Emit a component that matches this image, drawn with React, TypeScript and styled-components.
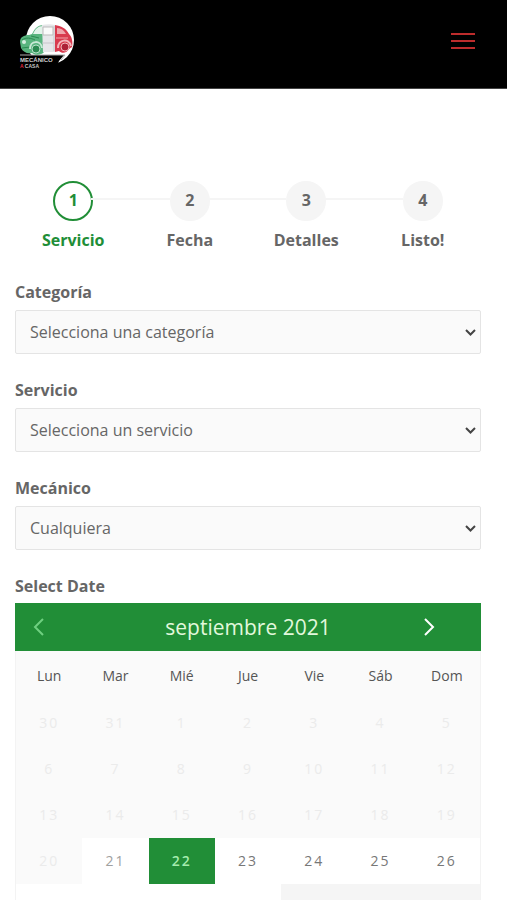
import React from "react";
import styled, { createGlobalStyle, css } from "styled-components";

const GREEN = "#218e37";

const GlobalStyle = createGlobalStyle`
  *, *::before, *::after { box-sizing: border-box; }
  body {
    margin: 0;
    background: #fff;
    color: #666;
    font-family: "Open Sans", sans-serif;
    font-size: 16px;
  }
`;

const Page = styled.div`
  height: 100vh;
  overflow-x: hidden;
  overflow-y: auto;
  scrollbar-width: none;
`;

const Header = styled.header`
  display: flex;
  align-items: center;
  justify-content: space-between;
  height: 89px;
  padding: 0 32px 6px 18px;
  background: #000;
  border-bottom: 1px solid #444;
`;

const LogoLink = styled.a`
  display: block;
  width: 58px;
  height: 54px;

  svg {
    display: block;
  }
`;

const MenuButton = styled.button`
  display: flex;
  padding: 0;
  border: 0;
  background: none;
`;

const Main = styled.main`
  padding: 92px 26px 30px 15px;
`;

const Steps = styled.ol`
  display: grid;
  grid-template-columns: repeat(4, 1fr);
  margin: 0 0 28px;
  padding: 0;
  list-style: none;
`;

const Step = styled.li<{ $active?: boolean }>`
  position: relative;
  display: flex;
  flex-direction: column;
  align-items: center;
  gap: 7px;
  font-weight: 700;
  line-height: 24px;
  color: ${(p) => (p.$active ? GREEN : "#666")};

  &:not(:last-child)::after {
    content: "";
    position: absolute;
    top: 17px;
    left: calc(50% + 18px);
    width: calc(100% - 38px);
    height: 2px;
    background: #f5f5f5;
  }
`;

const Circle = styled.span<{ $active?: boolean }>`
  display: flex;
  align-items: center;
  justify-content: center;
  width: 40px;
  height: 40px;
  padding-bottom: 2px;
  border-radius: 50%;
  background: ${(p) => (p.$active ? "#fff" : "#f5f5f5")};
  border: 2px solid ${(p) => (p.$active ? GREEN : "#f5f5f5")};
`;

const Field = styled.div`
  display: flex;
  flex-direction: column;
  gap: 6px;
  margin-bottom: 24px;
`;

const labelText = css`
  font-size: 16px;
  font-weight: 700;
  line-height: 24px;
  color: #666;
`;

const Label = styled.label`
  ${labelText}
`;

const DateLabel = styled.h2`
  ${labelText}
  margin: 0 0 5px;
`;

const SelectBox = styled.div`
  display: grid;
  align-items: center;

  > * {
    grid-area: 1 / 1;
  }

  svg {
    justify-self: end;
    margin-right: 4px;
    pointer-events: none;
  }
`;

const Select = styled.select`
  appearance: none;
  width: 100%;
  height: 44px;
  padding: 0 32px 0 14px;
  border: 1px solid #e4e4e4;
  border-radius: 2px;
  background: #fafafa;
  color: #666;
  font: inherit;
`;

const Calendar = styled.section`
  background: #fafafa;
`;

const MonthBar = styled.div`
  display: grid;
  grid-template-columns: 76px 1fr 76px;
  align-items: center;
  height: 48px;
  background: ${GREEN};
  color: #fff;
`;

const MonthName = styled.h3`
  margin: 0;
  font-size: 21px;
  font-weight: 400;
  line-height: 28px;
  text-align: center;
  color: #e2f8dc;
`;

const ArrowButton = styled.button`
  display: flex;
  padding: 0 0 0 18px;
  border: 0;
  background: none;
  color: #fff;

  &:disabled {
    color: #6fd080;
  }
`;

const Days = styled.table`
  width: 100%;
  table-layout: fixed;
  border-collapse: separate;
  border-spacing: 0;
  border: 1px solid #f3f3f3;
  border-top: 0;
`;

const WeekDay = styled.th`
  height: 49px;
  padding: 0;
  font-size: 14px;
  font-weight: 400;
  color: #555;
`;

type DayKind = "past" | "muted" | "today" | "open" | "empty";

const dayBackground: Record<DayKind, string> = {
  past: "#fafafa",
  muted: "#fff",
  today: GREEN,
  open: "#fff",
  empty: "#f5f5f5",
};

const dayColor: Record<DayKind, string> = {
  past: "#ebebeb",
  muted: "#a0a0a0",
  today: "#a5ecae",
  open: "#777",
  empty: "#f5f5f5",
};

const DayCell = styled.td<{ $kind: DayKind }>`
  height: 46px;
  padding: 0;
  background: ${(p) => dayBackground[p.$kind]};
`;

const DayButton = styled.button<{ $kind: DayKind }>`
  display: block;
  width: 100%;
  height: 46px;
  padding: 0;
  border: 0;
  background: none;
  color: ${(p) => dayColor[p.$kind]};
  font: inherit;
  font-size: 14px;
  font-weight: ${(p) => (p.$kind === "today" ? 600 : 400)};
  line-height: 14px;
  letter-spacing: 2px;
`;

const steps = ["Servicio", "Fecha", "Detalles", "Listo!"];

const fields = [
  { id: "categoria", label: "Categoría", value: "Selecciona una categoría" },
  { id: "servicio", label: "Servicio", value: "Selecciona un servicio" },
  { id: "mecanico", label: "Mecánico", value: "Cualquiera" },
];

const weekDays = ["Lun", "Mar", "Mié", "Jue", "Vie", "Sáb", "Dom"];

const weeks: (number | null)[][] = [
  [30, 31, 1, 2, 3, 4, 5],
  [6, 7, 8, 9, 10, 11, 12],
  [13, 14, 15, 16, 17, 18, 19],
  [20, 21, 22, 23, 24, 25, 26],
  [27, 28, 29, 30, null, null, null],
];

function kindOf(day: number | null, week: number): DayKind {
  if (day === null) return "empty";
  if (week < 3 || (week === 3 && day === 20)) return "past";
  if (day === 21) return "muted";
  if (day === 22) return "today";
  return "open";
}

function Logo() {
  return (
    <svg width="58" height="54" viewBox="0 0 58 54" aria-hidden="true">
      <circle cx="32" cy="26" r="24" fill="#fff" />
      <path d="M0 41h46l-5 6-3 7H0z" fill="#000" />
      <path d="M2 41h45l-4 5" fill="none" stroke="#aaa" />
      <path d="M2 28c0-5 4-7 9-7l3-1c3-6 6-9 12-9v27c-2 3-9 4-12 1-5 1-9-1-11-5z" fill="#58b47e" />
      <path d="M15 20c2-5 5-8 10-8v8z" fill="#e3f3ea" />
      <path d="M24 11c5-1 9-1 13 0v27H25z" fill="#e6e6e9" />
      <path d="M25 13h10v8H25z" fill="#fafafa" stroke="#bbb" />
      <path d="M24 29h12M36 12v25" fill="none" stroke="#c6c6ca" />
      <path d="M37 11c6 1 11 3 14 9 3 3 4 8 3 13l-3 2c-2 4-7 5-10 2l-4 1z" fill="#d93a4e" />
      <path d="M39 14c4 0 7 2 9 6h-9z" fill="#f0a6ad" />
      <path d="M4 26c4-3 9-2 13 0M13 22l8 2M4 34l8-1" fill="none" stroke="#2b8a51" />
      <path d="M12 35c0-9 11-9 12-1" fill="none" stroke="#c9e9d6" strokeWidth="2" />
      <circle cx="18" cy="35" r="4" fill="#2b8a51" stroke="#b8dfc8" />
      <circle cx="6" cy="28" r="2" fill="#d5eedf" />
      <path d="M40 34c0-9 11-10 13-2" fill="none" stroke="#f3b4ba" strokeWidth="2" />
      <circle cx="47" cy="33" r="4" fill="#ad2036" stroke="#f0b4ba" />
      <path d="M38 24h12" stroke="#f0a2a9" />
      <text x="2" y="48" fontFamily="Liberation Sans" fontSize="6" fontWeight="700" fill="#d0d0d0">MECÁNICO</text>
      <text x="2" y="54" fontFamily="Liberation Sans" fontSize="5" fontWeight="700" fill="#e0263c">
        A <tspan fill="#c4c4c4">CASA</tspan>
      </text>
    </svg>
  );
}

export default function App() {
  return (
    <Page>
      <GlobalStyle />
      <Header>
        <LogoLink href="#" aria-label="Mecánico a Casa">
          <Logo />
        </LogoLink>
        <MenuButton type="button" aria-label="Menú">
          <svg width="24" height="18" viewBox="0 0 24 18" fill="none" stroke="#bd2c2c" strokeWidth="2">
            <path d="M0 2h24M0 9h24M0 16h24" />
          </svg>
        </MenuButton>
      </Header>
      <Main>
        <Steps>
          {steps.map((name, i) => (
            <Step key={name} $active={i === 0} aria-current={i === 0 ? "step" : undefined}>
              <Circle $active={i === 0}>{i + 1}</Circle>
              <span>{name}</span>
            </Step>
          ))}
        </Steps>
        {fields.map((f) => (
          <Field key={f.id}>
            <Label htmlFor={f.id}>{f.label}</Label>
            <SelectBox>
              <Select id={f.id}>
                <option>{f.value}</option>
              </Select>
              <svg width="13" height="9" viewBox="0 0 13 9" fill="none" stroke="#444" strokeWidth="2">
                <path d="M2 2l4.500 4.500L11 2" />
              </svg>
            </SelectBox>
          </Field>
        ))}
        <DateLabel>Select Date</DateLabel>
        <Calendar>
          <MonthBar>
            <ArrowButton type="button" aria-label="Mes anterior" disabled>
              <svg width="12" height="18" viewBox="0 0 12 18" fill="none" stroke="currentColor" strokeWidth="2">
                <path d="M10 1L2 9l8 8" />
              </svg>
            </ArrowButton>
            <MonthName>septiembre 2021</MonthName>
            <ArrowButton type="button" aria-label="Mes siguiente">
              <svg width="12" height="18" viewBox="0 0 12 18" fill="none" stroke="currentColor" strokeWidth="2">
                <path d="M2 1l8 8-8 8" />
              </svg>
            </ArrowButton>
          </MonthBar>
          <Days>
            <thead>
              <tr>
                {weekDays.map((d) => (
                  <WeekDay key={d} scope="col">{d}</WeekDay>
                ))}
              </tr>
            </thead>
            <tbody>
              {weeks.map((week, w) => (
                <tr key={w}>
                  {week.map((day, i) => {
                    const kind = kindOf(day, w);
                    return (
                      <DayCell key={i} $kind={kind}>
                        {day !== null && (
                          <DayButton type="button" $kind={kind} disabled={kind === "past"}>
                            {day}
                          </DayButton>
                        )}
                      </DayCell>
                    );
                  })}
                </tr>
              ))}
            </tbody>
          </Days>
        </Calendar>
      </Main>
    </Page>
  );
}
